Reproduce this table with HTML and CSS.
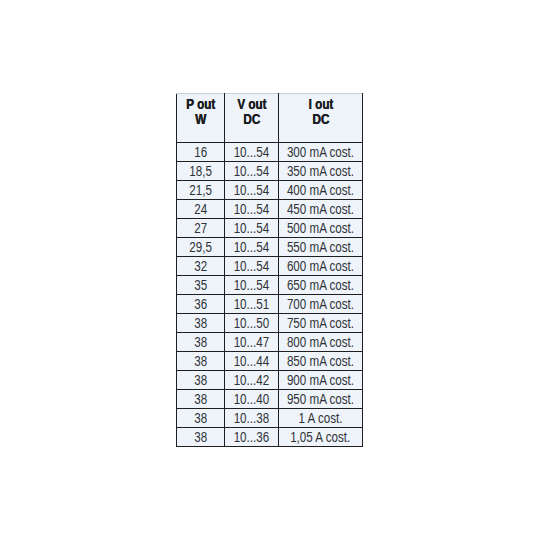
FILE: index.html
```html
<!DOCTYPE html>
<html>
<head>
<meta charset="utf-8">
<link rel="stylesheet" href="styles.css">
</head>
<body>
<div class="page">
<table class="spec">
<thead>
<tr><th class="c1"><span class="n">P out<br>W</span></th><th class="c2"><span class="n">V out<br>DC</span></th><th class="c3"><span class="n">I out<br>DC</span></th></tr>
</thead>
<tbody>
<tr><td><span class="n">16</span></td><td><span class="n">10...54</span></td><td><span class="n">300 mA cost.</span></td></tr>
<tr><td><span class="n">18,5</span></td><td><span class="n">10...54</span></td><td><span class="n">350 mA cost.</span></td></tr>
<tr><td><span class="n">21,5</span></td><td><span class="n">10...54</span></td><td><span class="n">400 mA cost.</span></td></tr>
<tr><td><span class="n">24</span></td><td><span class="n">10...54</span></td><td><span class="n">450 mA cost.</span></td></tr>
<tr><td><span class="n">27</span></td><td><span class="n">10...54</span></td><td><span class="n">500 mA cost.</span></td></tr>
<tr><td><span class="n">29,5</span></td><td><span class="n">10...54</span></td><td><span class="n">550 mA cost.</span></td></tr>
<tr><td><span class="n">32</span></td><td><span class="n">10...54</span></td><td><span class="n">600 mA cost.</span></td></tr>
<tr><td><span class="n">35</span></td><td><span class="n">10...54</span></td><td><span class="n">650 mA cost.</span></td></tr>
<tr><td><span class="n">36</span></td><td><span class="n">10...51</span></td><td><span class="n">700 mA cost.</span></td></tr>
<tr><td><span class="n">38</span></td><td><span class="n">10...50</span></td><td><span class="n">750 mA cost.</span></td></tr>
<tr><td><span class="n">38</span></td><td><span class="n">10...47</span></td><td><span class="n">800 mA cost.</span></td></tr>
<tr><td><span class="n">38</span></td><td><span class="n">10...44</span></td><td><span class="n">850 mA cost.</span></td></tr>
<tr><td><span class="n">38</span></td><td><span class="n">10...42</span></td><td><span class="n">900 mA cost.</span></td></tr>
<tr><td><span class="n">38</span></td><td><span class="n">10...40</span></td><td><span class="n">950 mA cost.</span></td></tr>
<tr><td><span class="n">38</span></td><td><span class="n">10...38</span></td><td><span class="n">1 A cost.</span></td></tr>
<tr><td><span class="n">38</span></td><td><span class="n">10...36</span></td><td><span class="n">1,05 A cost.</span></td></tr>
</tbody>
</table>
</div>
</body>
</html>
```
FILE: styles.css
```css
html, body {
  margin: 0;
  padding: 0;
  background: #ffffff;
}
.page {
  width: 540px;
  height: 540px;
  padding: 93px 0 0 176px;
  box-sizing: border-box;
}
.spec {
  border-collapse: collapse;
  table-layout: fixed;
  width: 187px;
  background: #eef4fa;
  color: #2f3236;
  font-family: "Liberation Sans", Arial, sans-serif;
  font-size: 14px;
}
.n {
  display: inline-block;
  white-space: nowrap;
  transform: scaleX(0.83);
  transform-origin: center;
}
.spec th {
  height: 49px;
  padding: 2px 0 0 0;
  box-sizing: border-box;
  vertical-align: top;
  font-weight: bold;
  font-size: 15px;
  line-height: 15px;
  color: #1a1c20;
  text-shadow: 0.4px 0 0 #1a1c20;
  border-left: 1px solid #1e1e1e;
  border-right: 1px solid #1e1e1e;
  border-top: 1px solid #c9ced4;
  border-bottom: 1px solid #1e1e1e;
  text-align: center;
  white-space: nowrap;
}
.spec th .n {
  transform: scaleX(0.78);
}
.spec .c1 { width: 48px; }
.spec .c2 { width: 54px; }
.spec .c3 { width: 84px; }
.spec td {
  height: 19px;
  padding: 0;
  box-sizing: border-box;
  line-height: 18px;
  text-align: center;
  white-space: nowrap;
  overflow: hidden;
  border: 1px solid #1e1e1e;
}
```
